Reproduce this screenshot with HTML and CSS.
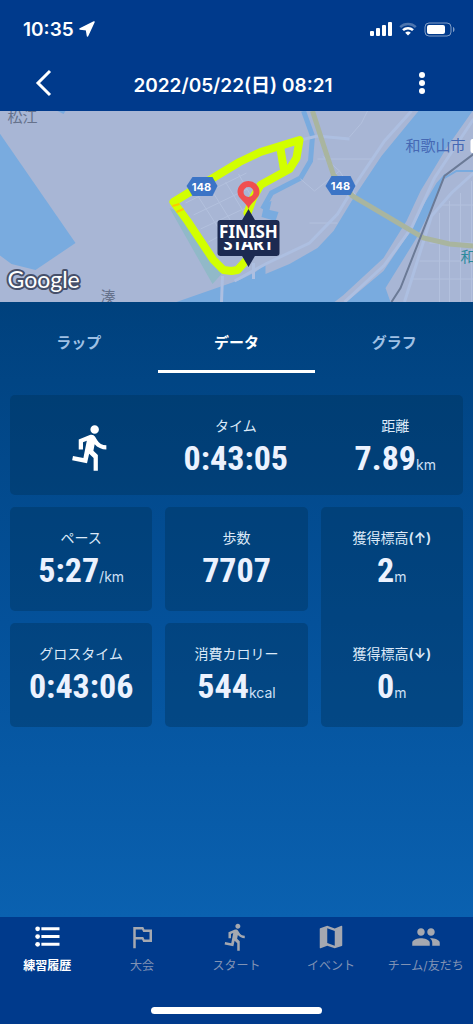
FILE: index.html
```html
<!DOCTYPE html>
<html lang="ja">

<head>
    <title>練習履歴</title>
    <meta charset="UTF-8">
    <meta name="viewport" content="width=device-width, initial-scale=1.0">
    <link rel="stylesheet" href="styles.css">
</head>

<body>
    <div class="app">
        <div class="status">
            <span class="time">10:35</span>
            <svg class="loc" viewBox="0 0 16 16"><path d="M15 1L1 8l6.500.8L8.500 15z" /></svg>
            <svg class="signal" viewBox="0 0 22 14">
                <rect x="0" y="9" width="4" height="5" rx="1" />
                <rect x="6" y="6" width="4" height="8" rx="1" />
                <rect x="12" y="3" width="4" height="11" rx="1" />
                <rect x="18" y="0" width="4" height="14" rx="1" />
            </svg>
            <svg class="wifi" viewBox="0 0 18 14">
                <path class="faint" d="M1.2 5.2a11.3 11.3 0 0 1 15.6 0" />
                <path d="M4 8.2a7.2 7.2 0 0 1 10 0" />
                <path class="dot" d="M9 13.6l-2.8-2.8a4 4 0 0 1 5.6 0z" />
            </svg>
            <svg class="battery" viewBox="0 0 31 15">
                <rect class="case" x="1" y="1" width="26" height="13" rx="4" />
                <rect x="3" y="3" width="18" height="9" rx="2" />
                <path class="tip" d="M29 5v5c2-.6 2-4.4 0-5z" />
            </svg>
        </div>

        <header>
            <button type="button" aria-label="戻る">
                <svg viewBox="0 0 28 28"><path class="back" d="M20 2L8 14l12 12" /></svg>
            </button>
            <h1>2022/05/22(日) 08:21</h1>
            <button type="button" aria-label="メニュー">
                <svg viewBox="0 0 28 28">
                    <circle cx="14" cy="6" r="3" />
                    <circle cx="14" cy="14" r="3" />
                    <circle cx="14" cy="22" r="3" />
                </svg>
            </button>
        </header>

        <svg class="map" viewBox="0 0 474 191" preserveAspectRatio="xMidYMid slice">
            <rect class="land" width="474" height="191" />
            <!-- 海と川 -->
            <g class="water">
                <path d="M0 22L76 132 36 159 12 153 0 144z" />
                <path d="M58 0h8l-2 3z" />
                <path d="M419 0h54L447 37 421 80 407 110 384 147 344 184 335 191H177L240 169 256 161 266 153V163L290 153 318 137 334 120 354 87 382 45z" />
                <path d="M446 62L437 72 424 94 411 120 384 160 347 191H391L386 177 417 127 437 87z" />
                <path d="M265 92L272 90 270 99 279 101 276 110 262 106z" />
            </g>
            <path class="canal" d="M304 0L313 25 311 50 301 67 272 82 263 98" />
            <path class="thin-water" d="M445 67L457 60H474" />
            <!-- 公園 -->
            <path class="park" d="M170 97L178 100 222 163 213 173z" />
            <!-- 街路 -->
            <g class="street">
                <path d="M186 92L247 62M194 104L248 78M201 118L248 96M209 131L222 124M199 86L224 125M212 79L232 111M226 71L246 104M239 63L251 84" />
                <path d="M323 45L340 60 315 80 301 68M340 60L356 84M310 112H338M374 48H318" />
                <path d="M440 102V191M450 90V191M461 82V191M472 70V191M430 132H474M420 150H474M410 168H474M440 94H474" />
                <path d="M350 26L362 12 368 0" />
            </g>
            <g class="lane">
                <path d="M301 29L318 25 350 28" />
                <path d="M235 170L266 153 310 132 338 103 358 70 385 30 412 0" />
                <path d="M345 191L385 154 412 117 435 67 474 8" />
                <path d="M405 191L432 105 452 82 474 62M223 165L222 191M254 152V168" />
            </g>
            <path class="road" d="M313 0L324 34 334 64 353 85 424 127 450 133 474 135" />
            <path class="rail" d="M474 43L445 65 401 177 392 191" />
            <!-- コース -->
            <path class="route" d="M248 148L238 159 232 160 224 159 214 149 188 110 174 91 192 80 240 51 261 41 300 29 297 47 290 58 261 74 254 86 248 102M281 38L284 56" />
            <path class="slow" d="M173 95l7-2M177 101l7-3" />
            <g class="badge">
                <path d="M193 66h20l5 9-5 10h-20l-6-10z" />
                <path d="M332 65h19l5 10-5 9h-19l-6-9z" />
                <text x="202" y="80">148</text>
                <text x="341" y="79">148</text>
            </g>
            <g class="place">
                <text class="gray" x="8" y="11">松江</text>
                <text class="gray" x="101" y="191">湊</text>
                <text class="city" x="406" y="40">和歌山市</text>
                <text class="spot" x="461" y="151">和</text>
            </g>
            <rect class="poi" x="471" y="28" width="8" height="14" rx="2" />
            <path class="pin" fill-rule="evenodd" d="M249 98c-2-7-11-10-11-17a11 11 0 0 1 22 0c0 7-9 10-11 17zM249 76a5 5 0 1 0 0 10 5 5 0 0 0 0-10z" />
            <g class="flag">
                <rect x="218" y="109" width="62" height="36" rx="3" />
                <path d="M242 110l7-12 7 12zM242 144l7 12 7-12z" />
                <text x="249" y="139">START</text>
                <rect x="219" y="111" width="60" height="20" />
                <text x="249" y="127">FINISH</text>
            </g>
            <text class="google" x="8" y="177">Google</text>
        </svg>

        <main>
            <nav class="tabs">
                <a href="#lap">ラップ</a>
                <a href="#data" class="on">データ</a>
                <a href="#graph">グラフ</a>
            </nav>

            <div class="card total">
                <svg class="run" viewBox="0 0 24 24"><use href="#i-run" /></svg>
                <dl>
                    <dt>タイム</dt>
                    <dd>0:43:05</dd>
                </dl>
                <dl>
                    <dt>距離</dt>
                    <dd>7.89<small>km</small></dd>
                </dl>
            </div>

            <div class="cards">
                <dl class="card">
                    <dt>ペース</dt>
                    <dd>5:27<small>/km</small></dd>
                </dl>
                <dl class="card">
                    <dt>歩数</dt>
                    <dd>7707</dd>
                </dl>
                <div class="card tall">
                    <dl>
                        <dt>獲得標高<b>(↑)</b></dt>
                        <dd>2<small>m</small></dd>
                    </dl>
                    <dl>
                        <dt>獲得標高<b>(↓)</b></dt>
                        <dd>0<small>m</small></dd>
                    </dl>
                </div>
                <dl class="card">
                    <dt>グロスタイム</dt>
                    <dd>0:43:06</dd>
                </dl>
                <dl class="card">
                    <dt>消費カロリー</dt>
                    <dd>544<small>kcal</small></dd>
                </dl>
            </div>
        </main>

        <footer>
            <nav class="menu">
                <a href="#history" class="on">
                    <svg viewBox="0 0 24 24">
                        <path d="M7.500 4.200H22v2.400H7.500zM7.500 10.400H22v2.400H7.500zM7.500 16.600H22V19H7.500z" />
                        <circle cx="4.500" cy="5.400" r="1.900" />
                        <circle cx="4.500" cy="11.600" r="1.900" />
                        <circle cx="4.500" cy="17.800" r="1.900" />
                    </svg>
                    練習履歴
                </a>
                <a href="#race">
                    <svg viewBox="0 0 24 24"><path d="M14 6l-1-2H5v17h2v-7h5l1 2h7V6h-6zm4 8h-4l-1-2H7V6h5l1 2h5v6z" /></svg>
                    大会
                </a>
                <a href="#start">
                    <svg viewBox="0 0 24 24">
                        <path id="i-run" d="M13.490 5.480c1.100 0 2-.9 2-2s-.9-2-2-2-2 .9-2 2 .9 2 2 2zm-3.600 13.900l1-4.400 2.100 2v6h2v-7.500l-2.100-2 .6-3c1.300 1.500 3.300 2.500 5.500 2.500v-2c-1.900 0-3.500-1-4.300-2.400l-1-1.600c-.4-.6-1-1-1.700-1-.3 0-.5.1-.8.1l-5.200 2.200v4.700h2v-3.400l1.800-.7-1.600 8.100-4.900-1-.4 2 7 1.400z" />
                    </svg>
                    スタート
                </a>
                <a href="#event">
                    <svg viewBox="0 0 24 24"><path d="M20.500 3l-.16.03L15 5.100 9 3 3.360 4.900c-.21.07-.36.25-.36.48V20.500c0 .28.22.5.5.5l.16-.03L9 18.900l6 2.100 5.640-1.900c.21-.07.36-.25.36-.48V3.500c0-.28-.22-.5-.5-.5zM15 19l-6-2.110V5l6 2.110V19z" /></svg>
                    イベント
                </a>
                <a href="#team">
                    <svg viewBox="0 0 24 24"><path d="M16 11c1.660 0 2.990-1.340 2.990-3S17.660 5 16 5c-1.660 0-3 1.340-3 3s1.340 3 3 3zm-8 0c1.660 0 2.990-1.340 2.990-3S9.660 5 8 5C6.340 5 5 6.340 5 8s1.340 3 3 3zm0 2c-2.330 0-7 1.170-7 3.500V19h14v-2.500c0-2.330-4.670-3.500-7-3.500zm8 0c-.29 0-.62.02-.97.05 1.160.84 1.970 1.970 1.970 3.450V19h6v-2.500c0-2.330-4.670-3.500-7-3.500z" /></svg>
                    チーム/友だち
                </a>
            </nav>
            <div class="home"></div>
        </footer>
    </div>
</body>

</html>
```

FILE: styles.css
```css
*
{
    box-sizing: border-box;
}

body
{
    margin: 0;
    color: #fff;
    background-color: #fff;
    font-family: Inter, "Noto Sans CJK JP", sans-serif;
}

a
{
    color: inherit;
    text-decoration: none;
}

dl,
dd
{
    margin: 0;
}

svg
{
    display: block;
    fill: currentColor;
}

.app
{
    display: flex;
    flex-direction: column;
    min-height: 100vh;
    margin-right: 1px;
    background-color: #003a8c;
}

.status
{
    display: flex;
    align-items: center;
    height: 58px;
    padding: 0 18px 0 23px;
}

.status .time
{
    font-size: 19px;
    font-weight: 600;
}

.loc
{
    width: 16px;
    height: 16px;
    margin-left: 5px;
    stroke: #fff;
    stroke-width: 1.5;
    stroke-linejoin: round;
}

.signal
{
    width: 22px;
    height: 14px;
    margin-left: auto;
}

.wifi
{
    width: 18px;
    height: 14px;
    margin: 0 7px;
    fill: none;
    stroke: #fff;
    stroke-width: 2.5;
}

.wifi .faint
{
    opacity: .3;
}

.wifi .dot
{
    fill: #fff;
    stroke: none;
}

.battery
{
    width: 31px;
    height: 15px;
}

.battery .case
{
    fill: none;
    stroke: #fff;
    opacity: .5;
}

.battery .tip
{
    opacity: .5;
}

header
{
    display: flex;
    align-items: center;
    justify-content: space-between;
    height: 53px;
    padding: 0 37px 3px 30px;
}

header h1
{
    margin: 0;
    font-size: 19px;
    font-weight: 600;
}

header button
{
    padding: 0;
    color: #fff;
    border: none;
    background: none;
}

header button svg
{
    width: 28px;
    height: 28px;
}

.back
{
    fill: none;
    stroke: #fff;
    stroke-width: 3;
}

/* 地図 */
.map
{
    width: 100%;
    height: 191px;
}

.land
{
    fill: #a8b6d5;
}

.water
{
    fill: #79abdf;
}

.canal,
.thin-water,
.street,
.lane,
.road,
.rail,
.route,
.slow
{
    fill: none;
}

.canal
{
    stroke: #79abdf;
    stroke-width: 5;
}

.thin-water
{
    stroke: #79abdf;
    stroke-width: 2;
}

.park
{
    fill: #91b9c8;
}

.street
{
    stroke: #b3c1de;
}

.lane
{
    stroke: #adbfe1;
    stroke-width: 3;
}

.road
{
    stroke: #a9b59f;
    stroke-width: 5;
}

.rail
{
    stroke: #6b7a96;
    stroke-width: 2;
}

.route
{
    stroke: #d2ff00;
    stroke-width: 8;
    stroke-linejoin: round;
    stroke-linecap: round;
}

.slow
{
    stroke: #ffc800;
    stroke-width: 2;
}

.badge
{
    fill: #3b74c6;
}

.badge text
{
    fill: #fff;
    font-size: 11px;
    font-weight: 700;
    text-anchor: middle;
}

.place
{
    font-size: 15px;
}

.place .gray
{
    fill: #66728c;
}

.place .city
{
    fill: #4568b4;
}

.place .spot
{
    fill: #2b8a9c;
}

.pin
{
    fill: #f04f50;
}

.flag
{
    fill: #1c2a51;
}

.flag text
{
    fill: #fff;
    font-family: "Noto Sans", sans-serif;
    font-size: 17px;
    font-weight: 700;
    text-anchor: middle;
}

.google
{
    fill: #fff;
    stroke: #46506a;
    stroke-width: 4;
    stroke-linejoin: round;
    paint-order: stroke;
    font-family: Lato, sans-serif;
    font-size: 23px;
    font-weight: 400;
}

/* データ */
main
{
    flex: 1;
    padding: 0 10px 24px;
    background: linear-gradient(#00417d, #04519a 52%, #0a61b0);
}

.tabs
{
    display: flex;
    margin: 0 -10px 22px;
    padding-top: 12px;
    font-size: 15px;
    font-weight: 700;
    text-align: center;
}

.tabs a
{
    flex: 1;
    height: 59px;
    line-height: 58px;
    color: #9fc0e4;
    border-bottom: 3px solid transparent;
}

.tabs .on
{
    color: #fff;
    border-color: #fff;
}

.card
{
    padding: 20px 0;
    border-radius: 5px;
    background-color: rgba(0, 51, 89, .4);
    text-align: center;
}

.total
{
    display: flex;
    align-items: center;
    justify-content: space-between;
    margin-bottom: 12px;
    padding: 20px 27px 16px 56px;
}

.cards
{
    display: grid;
    grid-template-columns: repeat(3, 1fr);
    gap: 12px 13px;
}

.tall
{
    grid-row: span 2;
}

.tall dl + dl
{
    margin-top: 52px;
}

.run
{
    width: 51px;
    height: 51px;
}

dt
{
    color: #dce9f8;
    font-size: 14px;
    line-height: 22px;
}

dt b
{
    font-weight: 600;
}

dd
{
    height: 42px;
    color: #ecf2fe;
    font-family: "Roboto Condensed", Roboto, sans-serif;
    font-size: 34px;
    font-weight: 700;
    line-height: 42px;
}

dd small
{
    color: #cfe0f6;
    font-family: Inter, sans-serif;
    font-size: 14px;
    font-weight: 400;
    line-height: 14px;
}

/* 下部メニュー */
footer
{
    padding: 5px 0 10px;
}

.menu
{
    display: flex;
    color: #8092b4;
    font-size: 12px;
    line-height: 18px;
    text-align: center;
}

.menu a
{
    flex: 1;
    white-space: nowrap;
}

.menu svg
{
    width: 30px;
    height: 30px;
    margin: 0 auto 5px;
    fill: #a5a8b0;
}

.menu .on
{
    color: #fff;
    font-weight: 700;
}

.menu .on svg
{
    fill: #fff;
}

.home
{
    width: 36%;
    height: 7px;
    margin: 32px auto 0;
    border-radius: 4px;
    background-color: #fff;
}
```
